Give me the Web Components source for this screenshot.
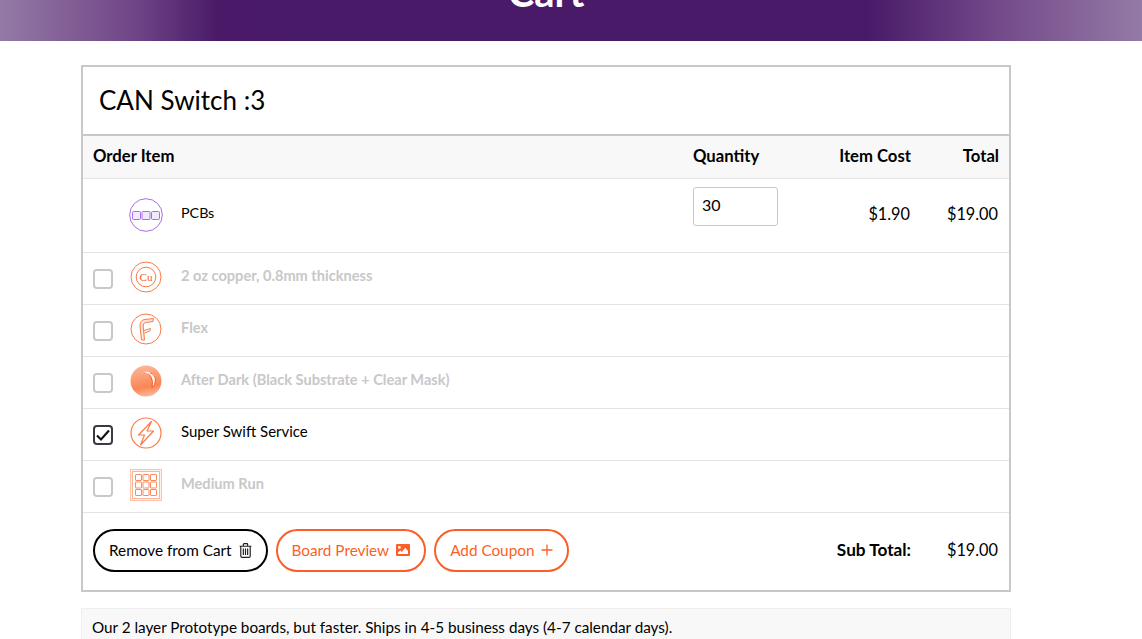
<!DOCTYPE html>
<html lang="en">
<head>
<meta charset="utf-8">
<title>Cart</title>
<style>
html, body { margin: 0; height: 639px; overflow: hidden; background: #fff; }
body { font-family: "Lato", "Liberation Sans", sans-serif; color: #000; }
</style>
</head>
<body>
<cart-banner>Cart</cart-banner>
<cart-card heading="CAN Switch :3">
  <cart-item icon="pcb" active bare qty="30" cost="$1.90" total="$19.00">PCBs</cart-item>
  <cart-item icon="cu">2 oz copper, 0.8mm thickness</cart-item>
  <cart-item icon="flex">Flex</cart-item>
  <cart-item icon="dark">After Dark (Black Substrate + Clear Mask)</cart-item>
  <cart-item icon="bolt" active checked>Super Swift Service</cart-item>
  <cart-item icon="grid">Medium Run</cart-item>
  <pill-button slot="actions" kind="dark" icon="trash">Remove from Cart</pill-button>
  <pill-button slot="actions" icon="image">Board Preview</pill-button>
  <pill-button slot="actions" icon="plus">Add Coupon</pill-button>
</cart-card>
<note-box>Our 2 layer Prototype boards, but faster. Ships in 4-5 business days (4-7 calendar days).</note-box>

<script>
const ICONS = {
  pcb: `<svg width="36" height="36" viewBox="0 0 36 36" fill="none" stroke="#a56ee8" stroke-width="1">
    <circle cx="18" cy="18" r="16.3"/>
    <rect x="4.5" y="14.5" width="8" height="8" rx="1" fill="#f1e9fc"/><rect x="14" y="14.5" width="8" height="8" rx="1" fill="#f1e9fc"/><rect x="23.5" y="14.5" width="8" height="8" rx="1" fill="#f1e9fc"/></svg>`,
  cu: `<svg width="32" height="32" viewBox="0 0 32 32" fill="none" stroke="#fb7a45" stroke-width="1">
    <circle cx="16" cy="16" r="15"/><circle cx="16" cy="16" r="9.8"/>
    <text x="16" y="19.5" text-anchor="middle" font-family="Liberation Serif, serif" font-size="11" fill="#f4581f" stroke="none">Cu</text></svg>`,
  flex: `<svg width="32" height="32" viewBox="0 0 32 32" fill="none" stroke="#fb7a45" stroke-width="1">
    <circle cx="16" cy="16" r="15"/>
    <path d="M11.5 27 L10 13 Q10 7 15 6.5 L23.5 5.5 L23 8.5 L15.5 9.5 Q13 10 13.2 13 L14.5 27 Z" fill="#fde6db"/>
    <path d="M14 17.5 L20.5 15.5 L20 17.8 L14.5 20"/></svg>`,
  dark: `<svg width="32" height="32" viewBox="0 0 32 32">
    <defs><linearGradient id="g" x1=".3" y1="0" x2=".5" y2="1"><stop offset="0" stop-color="#fcb79b"/><stop offset=".7" stop-color="#fa8655"/><stop offset="1" stop-color="#fcb59a"/></linearGradient></defs>
    <circle cx="16" cy="16" r="15.5" fill="url(#g)"/>
    <path d="M14 6.5 Q25.5 6.5 25.5 15 Q25.5 19.5 22 23 Q23.5 16 21 12 Q19 9 14 6.5 Z" fill="#fff1ea"/>
    <path d="M20 7.8 Q25.5 10 25.5 15 Q25.5 19.5 22 23 Q23.5 16 21 12 Q20 10 18 8.5" fill="none" stroke="#f4581f" stroke-width=".9"/></svg>`,
  bolt: `<svg width="32" height="32" viewBox="0 0 32 32" fill="none" stroke="#fb7a45" stroke-width="1.2">
    <circle cx="16" cy="16" r="15"/>
    <path d="M21.5 4.5 L8.5 18 L14.5 18 L10.5 28 L23.5 14 L17 14 Z" stroke-linejoin="round"/></svg>`,
  grid: `<svg width="32" height="32" viewBox="0 0 32 32" fill="none" stroke="#fb8a5c" stroke-width="1">
    <rect x=".5" y=".5" width="31" height="31" fill="#fff1ea" stroke="#fdc3ab"/><rect x="2.5" y="2.5" width="27" height="27" fill="#fff" stroke="#fdb598"/>
    <rect x="5.5" y="5.5" width="6" height="6" rx=".5"/><rect x="13" y="5.5" width="6" height="6" rx=".5"/><rect x="20.5" y="5.5" width="6" height="6" rx=".5"/>
    <rect x="5.5" y="13" width="6" height="6" rx=".5"/><rect x="13" y="13" width="6" height="6" rx=".5"/><rect x="20.5" y="13" width="6" height="6" rx=".5"/>
    <rect x="5.5" y="20.5" width="6" height="6" rx=".5"/><rect x="13" y="20.5" width="6" height="6" rx=".5"/><rect x="20.5" y="20.5" width="6" height="6" rx=".5"/></svg>`,
  trash: `<svg width="13" height="15" viewBox="0 0 12 14" fill="none" stroke="#222" stroke-width="1.1">
    <path d="M.5 3H11.5M4 3V1.2Q4 .6 4.6 .6H7.4Q8 .6 8 1.2V3M1.6 3V12.2Q1.6 13.4 2.8 13.4H9.2Q10.4 13.4 10.4 12.2V3M4 5.2V11.2M6 5.2V11.2M8 5.2V11.2"/></svg>`,
  image: `<svg width="14" height="12" viewBox="0 0 14 12">
    <path fill="#fb5f26" fill-rule="evenodd" d="M1 0H13Q14 0 14 1V11Q14 12 13 12H1Q0 12 0 11V1Q0 0 1 0ZM3.4 2A1.4 1.4 0 1 0 3.4 4.8 1.4 1.4 0 1 0 3.4 2ZM2 10H12V7L9.2 3.8 5.8 8 4.3 6.5 2 8.6Z"/></svg>`,
  plus: `<svg width="12" height="12" viewBox="0 0 12 12" stroke="#fb5f26" stroke-width="1.3"><path d="M6 .5V11.5M.5 6H11.5"/></svg>`
};

class CartBanner extends HTMLElement {
  constructor() {
    super();
    this.attachShadow({ mode: "open" }).innerHTML = `
    <style>
      :host {
        display: flex; justify-content: center; align-items: flex-end;
        height: 41px; overflow: hidden; color: #fff;
        background: linear-gradient(90deg, #947aa6 0, #6f4486 12%, #4a1a68 19%, #481a68 76%, #6f4486 86%, #947aa6 100%);
      }
      div { font-size: 40px; font-weight: 700; line-height: 44px; padding: 0 50px 27px 0; }
    </style>
    <div><slot></slot></div>`;
  }
}

class CartCard extends HTMLElement {
  constructor() {
    super();
    this.attachShadow({ mode: "open" }).innerHTML = `
    <style>
      :host {
        display: block; box-sizing: border-box; width: 930px; height: 527px;
        margin: 24px 0 0 81px; border: 2px solid #c8c8c8;
      }
      h2 {
        margin: 0; height: 69px; box-sizing: border-box; padding: 15px 16px 0;
        font-size: 26px; font-weight: 400; line-height: 36px;
        border-bottom: 2px solid #c8c8c8;
      }
      .head {
        display: grid; grid-template-columns: 600px 118px 100px 88px;
        height: 43px; box-sizing: border-box; padding: 0 10px 2px; align-items: center;
        background: #f8f8f8; border-bottom: 1px solid #e4e4e4;
        font-size: 16.7px; font-weight: 700;
      }
      .head span:nth-child(n+3) { text-align: right; }
      .foot {
        display: flex; align-items: center; height: 77px; box-sizing: border-box;
        padding: 0 11px 2px 10px; gap: 8px;
      }
      .sub { margin: -3px -1px 0 auto; font-size: 17.2px; font-weight: 700; width: 80px; text-align: right; white-space: nowrap; }
      .amt { margin-top: -3px; font-size: 16.3px; width: 80px; text-align: right; }
    </style>
    <h2></h2>
    <div class="head"><span>Order Item</span><span>Quantity</span><span>Item Cost</span><span>Total</span></div>
    <slot></slot>
    <div class="foot"><slot name="actions"></slot><span class="sub">Sub Total:</span><span class="amt">$19.00</span></div>`;
  }
  connectedCallback() {
    this.shadowRoot.querySelector("h2").textContent = this.getAttribute("heading");
  }
}

class CartItem extends HTMLElement {
  connectedCallback() {
    const active = this.hasAttribute("active");
    const bare = this.hasAttribute("bare");
    const qty = this.getAttribute("qty");
    const checked = this.hasAttribute("checked");
    const box = bare ? "" : `<span class="box ${checked ? "on" : ""}">${checked ? `<svg width="14" height="12" viewBox="0 0 14 12" fill="none" stroke="#111" stroke-width="2.1"><path d="M1 6.5L5 10.5L13 1.5"/></svg>` : ""}</span>`;
    this.attachShadow({ mode: "open" }).innerHTML = `
    <style>
      :host {
        display: grid; grid-template-columns: 37px 51px 512px 118px 100px 88px;
        box-sizing: border-box; height: ${bare ? 74 : 52}px; padding: 0 10px;
        border-bottom: 1px solid #e4e4e4; align-items: center;
      }
      .box {
        width: 16px; height: 16px; border: 2px solid #c8c8c8; border-radius: 4px;
        display: flex; align-items: center; justify-content: center;
      }
      .box.on { border-color: #3a3a44; }
      .ic { display: flex; margin-top: ${bare ? -2 : -3}px; margin-left: ${bare ? -2 : 0}px; }
      .label { color: ${active ? "#000" : "#c8c8c8"}; font-weight: ${active ? 400 : 700}; margin-top: -7px; white-space: nowrap; font-size: ${bare ? 14.3 : active ? 15 : 14.6}px; }
      .qty {
        box-sizing: border-box; width: 85px; height: 39px; border: 1px solid #c8c8c8; border-radius: 3px;
        padding: 0 8px 4px; display: flex; align-items: center; font-size: 16px; margin-top: -18px;
      }
      .num { text-align: right; font-size: 16.3px; margin-top: -5px; padding-right: 1px; }
    </style>
    ${box || "<span></span>"}
    <span class="ic">${ICONS[this.getAttribute("icon")]}</span>
    <span class="label"><slot></slot></span>
    ${qty ? `<span class="qty">${qty}</span><span class="num">${this.getAttribute("cost")}</span><span class="num">${this.getAttribute("total")}</span>` : ""}`;
  }
}

class PillButton extends HTMLElement {
  connectedCallback() {
    const dark = this.getAttribute("kind") === "dark";
    this.attachShadow({ mode: "open" }).innerHTML = `
    <style>
      :host {
        display: inline-flex; align-items: center; gap: 7px; box-sizing: border-box;
        height: 43px; padding: 0 14px; border-radius: 22px; white-space: nowrap;
        border: 2px solid ${dark ? "#000" : "#fb5f26"};
        color: ${dark ? "#000" : "#fb5f26"}; font-size: 15.3px; background: #fff;
      }
      span { margin-top: -2px; }
      svg { display: block; margin-top: -1px; }
    </style>
    <span><slot></slot></span>${ICONS[this.getAttribute("icon")]}`;
  }
}

class NoteBox extends HTMLElement {
  constructor() {
    super();
    this.attachShadow({ mode: "open" }).innerHTML = `
    <style>
      :host {
        display: block; box-sizing: border-box; width: 930px; margin: 16px 0 0 81px;
        padding: 8px 10px; background: #f8f8f8; border: 1px solid #eee;
        font-size: 15.25px; line-height: 20px;
      }
    </style>
    <slot></slot>`;
  }
}

customElements.define("cart-banner", CartBanner);
customElements.define("cart-card", CartCard);
customElements.define("cart-item", CartItem);
customElements.define("pill-button", PillButton);
customElements.define("note-box", NoteBox);
</script>
</body>
</html>
